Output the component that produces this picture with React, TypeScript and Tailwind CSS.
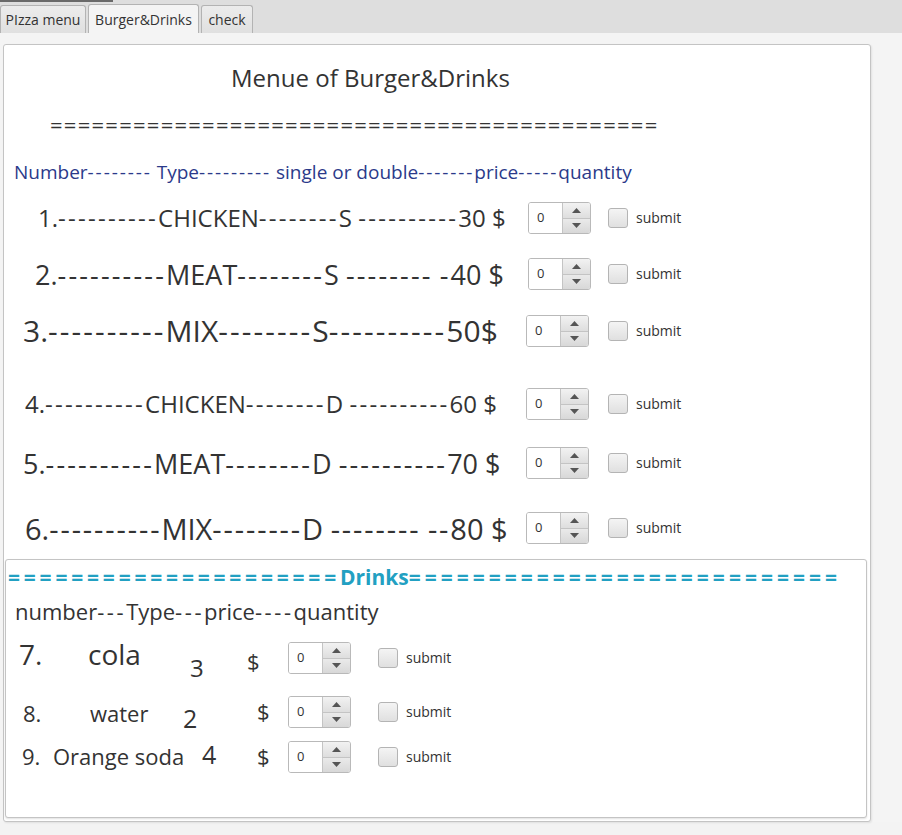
import React from 'react';

function Spinner() {
  return (
    <div className="flex h-[32px] w-[63px] shrink-0 self-center overflow-hidden rounded-[3px] border border-[#b9b9b9]">
      <div className="flex w-[34px] items-center bg-white pl-[8px] text-[13px] text-[#333]">0</div>
      <div className="flex w-[29px] flex-col border-l border-[#c4c4c4]">
        <div className="flex flex-1 items-center justify-center border-b border-[#c4c4c4] bg-gradient-to-b from-[#f2f2f2] to-[#dedede]">
          <svg width="9" height="5" viewBox="0 0 9 5">
            <polygon points="0,5 4.5,0 9,5" fill="#555" />
          </svg>
        </div>
        <div className="flex flex-1 items-center justify-center bg-gradient-to-b from-[#eaeaea] to-[#d8d8d8]">
          <svg width="9" height="5" viewBox="0 0 9 5">
            <polygon points="0,0 9,0 4.5,5" fill="#555" />
          </svg>
        </div>
      </div>
    </div>
  );
}

function Submit({ gap }: { gap: string }) {
  return (
    <div className={`flex shrink-0 items-center self-center ${gap}`}>
      <div className="h-[20px] w-[20px] rounded-[3px] border border-[#b4b4b4] bg-gradient-to-b from-[#f4f4f4] to-[#e0e0e0]" />
      <span className="ml-[8px] text-[14px] leading-none text-[#333]">submit</span>
    </div>
  );
}

// widen runs of hyphens so they take the room they take in the original font
function Dashed({ text, cls }: { text: string; cls: string }) {
  const parts = text.split(/(-+)/);
  return (
    <>
      {parts.map((p, i) =>
        p.startsWith('-') ? (
          <span key={i} className={cls}>
            {p}
          </span>
        ) : (
          p
        )
      )}
    </>
  );
}

const burgers = [
  { text: '1.----------CHICKEN--------S ----------30 $', pl: 'pl-[34px]', w: 'w-[524px]', fs: 'text-[24px]', tr: 'tracking-[0.095em]', mt: 'mt-[14px]', gap: 'ml-[17px]' },
  { text: '2.----------MEAT--------S -------- -40 $', pl: 'pl-[31px]', w: 'w-[524px]', fs: 'text-[27px]', tr: 'tracking-[0.08em]', mt: 'mt-[24px]', gap: 'ml-[17px]' },
  { text: '3.----------MIX--------S----------50$', pl: 'pl-[19px]', w: 'w-[522px]', fs: 'text-[30px]', tr: 'tracking-[0.07em]', mt: 'mt-[25px]', gap: 'ml-[19px]' },
  { text: '4.----------CHICKEN--------D ----------60 $', pl: 'pl-[21px]', w: 'w-[522px]', fs: 'text-[24px]', tr: 'tracking-[0.095em]', mt: 'mt-[41px]', gap: 'ml-[19px]' },
  { text: '5.----------MEAT--------D ----------70 $', pl: 'pl-[19px]', w: 'w-[522px]', fs: 'text-[27px]', tr: 'tracking-[0.08em]', mt: 'mt-[27px]', gap: 'ml-[19px]' },
  { text: '6.----------MIX--------D -------- --80 $', pl: 'pl-[21px]', w: 'w-[522px]', fs: 'text-[29px]', tr: 'tracking-[0.065em]', mt: 'mt-[33px]', gap: 'ml-[19px]' },
];

export default function App() {
  return (
    <div className="h-[835px] w-[902px] overflow-hidden bg-[#f3f3f3] font-['Open_Sans',sans-serif] text-[#333]">
      {/* tab header */}
      <div className="flex h-[33px] flex-col bg-[#dedede]">
        <div className="h-[2px] w-[113px] bg-[#6a6a6a]" />
        <div className="mt-[2px] flex flex-1 items-end gap-[2px]">
          <div className="flex h-[28px] w-[86px] items-center justify-center rounded-t-[3px] border border-b-0 border-[#b3b3b3] bg-gradient-to-b from-[#ececec] to-[#e0e0e0] text-[14px]">
            PIzza menu
          </div>
          <div className="flex h-[29px] w-[111px] items-center justify-center rounded-t-[3px] border border-b-0 border-[#b3b3b3] bg-[#f4f4f4] text-[14px]">
            Burger&amp;Drinks
          </div>
          <div className="flex h-[28px] w-[52px] items-center justify-center rounded-t-[3px] border border-b-0 border-[#b3b3b3] bg-gradient-to-b from-[#ececec] to-[#e0e0e0] text-[14px]">
            check
          </div>
        </div>
      </div>

      {/* content */}
      <div className="flex bg-[#f4f4f4] pl-[3px] pt-[11px]">
        <div className="flex h-[778px] w-[868px] flex-col rounded-[3px] border border-[#c4c4c4] bg-white shadow-[1px_1px_2px_rgba(0,0,0,0.08)]">
          <div className="mt-[17px] flex h-[32px] items-center pl-[227px] text-[24px] leading-none">Menue of Burger&amp;Drinks</div>
          <div className="mt-[14px] flex h-[32px] items-center whitespace-nowrap pl-[46px] text-[22px] leading-none tracking-[1.25px]">
            ============================================
          </div>
          <div className="mt-[16px] flex h-[32px] items-center whitespace-nowrap pl-[10px] text-[19px] leading-none text-[#2b3a8a]">
            <span>
              <Dashed text="Number-------- Type--------- single or double-------price-----quantity" cls="tracking-[0.1em]" />
            </span>
          </div>

          {burgers.map((b, i) => (
            <div key={i} className={`flex h-[32px] items-center ${b.mt}`}>
              <div className={`shrink-0 whitespace-nowrap leading-none ${b.w} ${b.pl} ${b.fs}`}>
                <Dashed text={b.text} cls={b.tr} />
              </div>
              <Spinner />
              <Submit gap={b.gap} />
            </div>
          ))}

          {/* drinks */}
          <div className="ml-[1px] mt-[15px] flex h-[259px] w-[862px] flex-col rounded-[3px] border border-[#c4c4c4] bg-white shadow-[0_1px_2px_rgba(0,0,0,0.12)]">
            <div className="mt-[1px] flex h-[32px] items-center whitespace-nowrap pl-[2px] text-[21px] font-bold leading-none text-[#22a0c2]">
              <span className="tracking-[3.8px]">=====================</span>
              <span>Drinks</span>
              <span className="tracking-[4px]">===========================</span>
            </div>
            <div className="mt-[2px] flex h-[32px] items-center whitespace-nowrap pl-[9px] text-[22px] leading-none">
              <span>
                <Dashed text="number---Type---price----quantity" cls="tracking-[0.117em]" />
              </span>
            </div>

            <div className="mt-[15px] flex h-[32px] items-start pl-[13px]">
              <div className="-mt-[2px] w-[69px] shrink-0 text-[28px] leading-none">7.</div>
              <div className="-mt-[2px] w-[102px] shrink-0 text-[28px] leading-none">cola</div>
              <div className="mt-[14px] w-[57px] shrink-0 text-[24px] leading-none">3</div>
              <div className="mt-[8px] w-[41px] shrink-0 text-[22px] leading-none">$</div>
              <Spinner />
              <Submit gap="ml-[27px]" />
            </div>

            <div className="mt-[22px] flex h-[32px] items-start pl-[17px]">
              <div className="mt-[6px] w-[67px] shrink-0 text-[22px] leading-none">8.</div>
              <div className="mt-[6px] w-[93px] shrink-0 text-[22px] leading-none">water</div>
              <div className="mt-[10px] w-[74px] shrink-0 text-[25px] leading-none">2</div>
              <div className="mt-[4px] w-[31px] shrink-0 text-[22px] leading-none">$</div>
              <Spinner />
              <Submit gap="ml-[27px]" />
            </div>

            <div className="mt-[13px] flex h-[32px] items-start pl-[16px]">
              <div className="mt-[4px] w-[31px] shrink-0 text-[22px] leading-none">9.</div>
              <div className="mt-[4px] w-[149px] shrink-0 whitespace-nowrap text-[22px] leading-none">Orange soda</div>
              <div className="mt-[1px] w-[55px] shrink-0 text-[25px] leading-none">4</div>
              <div className="mt-[4px] w-[31px] shrink-0 text-[22px] leading-none">$</div>
              <Spinner />
              <Submit gap="ml-[27px]" />
            </div>
          </div>
        </div>
      </div>
    </div>
  );
}
